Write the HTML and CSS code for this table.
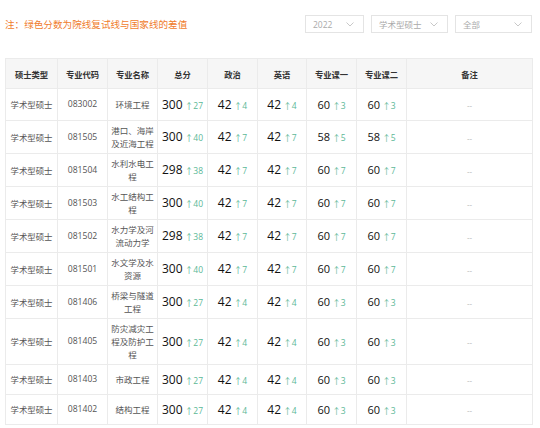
FILE: index.html
```html
<!DOCTYPE html>
<html lang="zh">
<head>
<meta charset="utf-8">
<link rel="stylesheet" href="styles.css">
</head>
<body>
<div class="toolbar">
  <div class="note">注：绿色分数为院线复试线与国家线的差值</div>
  <div class="filters">
    <div class="select s-year"><span>2022</span><svg class="chev" viewBox="0 0 8 5" width="8" height="5"><path d="M0.5 0.5 L4 4 L7.5 0.5" fill="none" stroke="#c8c8c8" stroke-width="1"/></svg></div>
    <div class="select s-type"><span>学术型硕士</span><svg class="chev" viewBox="0 0 8 5" width="8" height="5"><path d="M0.5 0.5 L4 4 L7.5 0.5" fill="none" stroke="#c8c8c8" stroke-width="1"/></svg></div>
    <div class="select s-all"><span>全部</span><svg class="chev" viewBox="0 0 8 5" width="8" height="5"><path d="M0.5 0.5 L4 4 L7.5 0.5" fill="none" stroke="#c8c8c8" stroke-width="1"/></svg></div>
  </div>
</div>
<table class="score-table">
  <colgroup>
    <col class="c1"><col class="c2"><col class="c3"><col class="c4"><col class="c5"><col class="c6"><col class="c7"><col class="c8"><col class="c9">
  </colgroup>
  <thead>
    <tr><th>硕士类型</th><th>专业代码</th><th>专业名称</th><th>总分</th><th>政治</th><th>英语</th><th>专业课一</th><th>专业课二</th><th>备注</th></tr>
  </thead>
  <tbody>
    <tr><td>学术型硕士</td><td class="code">083002</td><td class="name">环境工程</td><td><span class="num big">300</span> <span class="diff">↑27</span></td><td><span class="num big">42</span> <span class="diff">↑4</span></td><td><span class="num big">42</span> <span class="diff">↑4</span></td><td><span class="num">60</span> <span class="diff">↑3</span></td><td><span class="num">60</span> <span class="diff">↑3</span></td><td class="rem">--</td></tr>
    <tr><td>学术型硕士</td><td class="code">081505</td><td class="name">港口、海岸及近海工程</td><td><span class="num big">300</span> <span class="diff">↑40</span></td><td><span class="num big">42</span> <span class="diff">↑7</span></td><td><span class="num big">42</span> <span class="diff">↑7</span></td><td><span class="num">58</span> <span class="diff">↑5</span></td><td><span class="num">58</span> <span class="diff">↑5</span></td><td class="rem">--</td></tr>
    <tr><td>学术型硕士</td><td class="code">081504</td><td class="name">水利水电工程</td><td><span class="num big">298</span> <span class="diff">↑38</span></td><td><span class="num big">42</span> <span class="diff">↑7</span></td><td><span class="num big">42</span> <span class="diff">↑7</span></td><td><span class="num">60</span> <span class="diff">↑7</span></td><td><span class="num">60</span> <span class="diff">↑7</span></td><td class="rem">--</td></tr>
    <tr><td>学术型硕士</td><td class="code">081503</td><td class="name">水工结构工程</td><td><span class="num big">300</span> <span class="diff">↑40</span></td><td><span class="num big">42</span> <span class="diff">↑7</span></td><td><span class="num big">42</span> <span class="diff">↑7</span></td><td><span class="num">60</span> <span class="diff">↑7</span></td><td><span class="num">60</span> <span class="diff">↑7</span></td><td class="rem">--</td></tr>
    <tr><td>学术型硕士</td><td class="code">081502</td><td class="name">水力学及河流动力学</td><td><span class="num big">298</span> <span class="diff">↑38</span></td><td><span class="num big">42</span> <span class="diff">↑7</span></td><td><span class="num big">42</span> <span class="diff">↑7</span></td><td><span class="num">60</span> <span class="diff">↑7</span></td><td><span class="num">60</span> <span class="diff">↑7</span></td><td class="rem">--</td></tr>
    <tr><td>学术型硕士</td><td class="code">081501</td><td class="name">水文学及水资源</td><td><span class="num big">300</span> <span class="diff">↑40</span></td><td><span class="num big">42</span> <span class="diff">↑7</span></td><td><span class="num big">42</span> <span class="diff">↑7</span></td><td><span class="num">60</span> <span class="diff">↑7</span></td><td><span class="num">60</span> <span class="diff">↑7</span></td><td class="rem">--</td></tr>
    <tr><td>学术型硕士</td><td class="code">081406</td><td class="name">桥梁与隧道工程</td><td><span class="num big">300</span> <span class="diff">↑27</span></td><td><span class="num big">42</span> <span class="diff">↑4</span></td><td><span class="num big">42</span> <span class="diff">↑4</span></td><td><span class="num">60</span> <span class="diff">↑3</span></td><td><span class="num">60</span> <span class="diff">↑3</span></td><td class="rem">--</td></tr>
    <tr><td>学术型硕士</td><td class="code">081405</td><td class="name">防灾减灾工程及防护工程</td><td><span class="num big">300</span> <span class="diff">↑27</span></td><td><span class="num big">42</span> <span class="diff">↑4</span></td><td><span class="num big">42</span> <span class="diff">↑4</span></td><td><span class="num">60</span> <span class="diff">↑3</span></td><td><span class="num">60</span> <span class="diff">↑3</span></td><td class="rem">--</td></tr>
    <tr><td>学术型硕士</td><td class="code">081403</td><td class="name">市政工程</td><td><span class="num big">300</span> <span class="diff">↑27</span></td><td><span class="num big">42</span> <span class="diff">↑4</span></td><td><span class="num big">42</span> <span class="diff">↑4</span></td><td><span class="num">60</span> <span class="diff">↑3</span></td><td><span class="num">60</span> <span class="diff">↑3</span></td><td class="rem">--</td></tr>
    <tr><td>学术型硕士</td><td class="code">081402</td><td class="name">结构工程</td><td><span class="num big">300</span> <span class="diff">↑27</span></td><td><span class="num big">42</span> <span class="diff">↑4</span></td><td><span class="num big">42</span> <span class="diff">↑4</span></td><td><span class="num">60</span> <span class="diff">↑3</span></td><td><span class="num">60</span> <span class="diff">↑3</span></td><td class="rem">--</td></tr>
  </tbody>
</table>
</body>
</html>
```
FILE: styles.css
```css
html, body {
  margin: 0;
  padding: 0;
  background: #fff;
}
body {
  padding: 15px 8px 0 5px;
  font-family: "Open Sans", "Noto Sans CJK SC", sans-serif;
  color: #333;
}
.toolbar {
  display: flex;
  align-items: center;
  justify-content: space-between;
  width: 527px;
  height: 18px;
}
.note {
  font-family: "Noto Sans CJK SC", sans-serif;
  font-size: 9.6px;
  color: #f07c2c;
  line-height: 18px;
}
.filters {
  display: flex;
  gap: 7px;
}
.select {
  box-sizing: border-box;
  height: 18px;
  border: 1px solid #e4e4e4;
  display: flex;
  align-items: center;
  justify-content: space-between;
  padding: 0 9px 0 7px;
  font-size: 8.5px;
  color: #aaa;
  font-family: "Open Sans", "Noto Sans CJK SC", sans-serif;
}
.s-year { width: 59px; }
.s-type { width: 77px; }
.s-all { width: 77px; }
.chev { display: block; }

.score-table {
  margin-top: 25px;
  border-collapse: collapse;
  table-layout: fixed;
  width: 527px;
}
.c1 { width: 52px; }
.c2 { width: 50px; }
.c3 { width: 50px; }
.c4 { width: 50px; }
.c5 { width: 50px; }
.c6 { width: 49px; }
.c7 { width: 50px; }
.c8 { width: 50px; }
.c9 { width: 126px; }

.score-table th,
.score-table td {
  border: 1px solid #ebebeb;
  text-align: center;
  vertical-align: middle;
}
.score-table th {
  background: #f6f6f6;
  height: 29px;
  padding: 0;
  font-family: "Noto Sans CJK SC", sans-serif;
  font-size: 8.3px;
  font-weight: 700;
  color: #333;
}
.score-table td {
  height: 30px;
  padding: 3px 2px;
  font-family: "Open Sans", "Noto Sans CJK SC", sans-serif;
  font-size: 8.4px;
  line-height: 13px;
  color: #555;
  box-sizing: border-box;
}
.score-table tbody tr:first-child td { height: 32px; }
.score-table td.code {
  font-size: 8.6px;
  color: #555;
}
.score-table td.name {
  padding: 3px 1px;
  font-size: 8.5px;
}
.num {
  font-size: 11px;
  line-height: 13px;
  color: #111;
}
.num.big { font-size: 12px; }
.diff {
  font-size: 8.5px;
  line-height: 13px;
  color: #5cb897;
}
.score-table td.rem { font-size: 8px; color: #b0b0b0; }
```
